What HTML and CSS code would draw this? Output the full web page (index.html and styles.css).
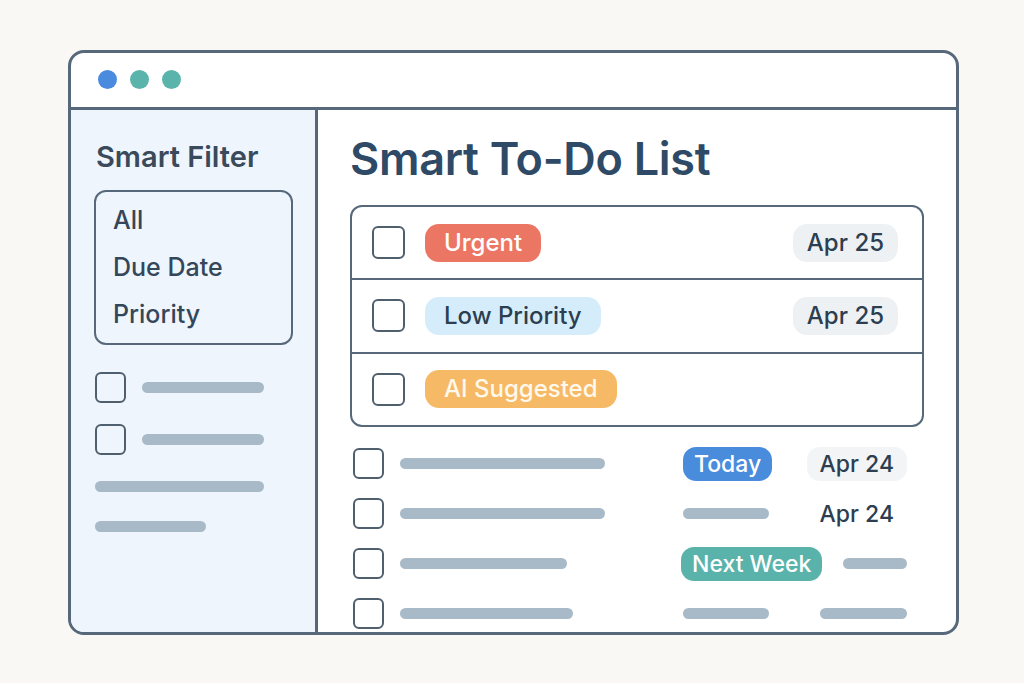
FILE: index.html
```html
<!DOCTYPE html>
<html lang="en">
<head>
  <meta charset="UTF-8" />
  <title>Smart To-Do List</title>
  <link rel="stylesheet" href="styles.css">
</head>

<body>
  <div class="window">
    <div class="titlebar">
      <span class="dot dot-blue"></span>
      <span class="dot dot-teal"></span>
      <span class="dot dot-teal"></span>
    </div>

    <div class="window-body">
      <!-- Sidebar -->
      <div class="sidebar">
        <div class="sidebar-title">Smart Filter</div>
        <div class="filter-box">
          <div class="filter-item">All</div>
          <div class="filter-item">Due Date</div>
          <div class="filter-item">Priority</div>
        </div>

        <div class="side-row">
          <span class="checkbox"></span>
          <span class="bar side-bar"></span>
        </div>
        <div class="side-row second">
          <span class="checkbox"></span>
          <span class="bar side-bar"></span>
        </div>
        <span class="bar side-bar-wide"></span>
        <span class="bar side-bar-short"></span>
      </div>

      <!-- Main list -->
      <div class="main">
        <h1 class="main-title">Smart To-Do List</h1>

        <div class="task-box">
          <div class="task-row">
            <span class="checkbox big"></span>
            <span class="tag tag-urgent">Urgent</span>
            <span class="date-pill">Apr 25</span>
          </div>
          <div class="task-row">
            <span class="checkbox big"></span>
            <span class="tag tag-low">Low Priority</span>
            <span class="date-pill">Apr 25</span>
          </div>
          <div class="task-row">
            <span class="checkbox big"></span>
            <span class="tag tag-ai">AI Suggested</span>
          </div>
        </div>

        <div class="todo-list">
          <div class="todo-row">
            <span class="checkbox"></span>
            <div class="todo-text"><span class="bar" style="width: 205px"></span></div>
            <div class="todo-tag"><span class="small-tag tag-today">Today</span></div>
            <div class="todo-date"><span class="small-date">Apr 24</span></div>
          </div>
          <div class="todo-row">
            <span class="checkbox"></span>
            <div class="todo-text"><span class="bar" style="width: 205px"></span></div>
            <div class="todo-tag"><span class="bar" style="width: 86px"></span></div>
            <div class="todo-date"><span class="small-date plain">Apr 24</span></div>
          </div>
          <div class="todo-row">
            <span class="checkbox"></span>
            <div class="todo-text"><span class="bar" style="width: 167px"></span></div>
            <div class="todo-tag"><span class="small-tag tag-week">Next Week</span></div>
            <div class="todo-date"><span class="bar" style="width: 64px"></span></div>
          </div>
          <div class="todo-row">
            <span class="checkbox"></span>
            <div class="todo-text"><span class="bar" style="width: 173px"></span></div>
            <div class="todo-tag"><span class="bar" style="width: 86px"></span></div>
            <div class="todo-date"><span class="bar" style="width: 87px"></span></div>
          </div>
        </div>
      </div>
    </div>
  </div>
</body>
</html>
```

FILE: styles.css
```css
* {
  margin: 0;
  padding: 0;
  box-sizing: border-box;
  font-family: 'Inter', 'Liberation Sans', sans-serif;
}

body {
  background-color: #FAF8F5;
  padding: 50px 0 0 68px;
}

.window {
  width: 891px;
  height: 585px;
  background-color: white;
  border: 3px solid #56687A;
  border-radius: 16px;
  overflow: hidden;
  display: flex;
  flex-direction: column;
}

.titlebar {
  height: 57px;
  border-bottom: 3px solid #56687A;
  display: flex;
  align-items: center;
  gap: 13px;
  padding-left: 27px;
  padding-bottom: 2px;
  flex-shrink: 0;
}

.dot {
  width: 19px;
  height: 19px;
  border-radius: 50%;
}

.dot-blue {
  background-color: #4A8BE0;
}

.dot-teal {
  background-color: #5BB4AC;
}

.window-body {
  flex: 1;
  display: flex;
  min-height: 0;
}

/* Sidebar */
.sidebar {
  width: 247px;
  background-color: #EEF5FC;
  border-right: 3px solid #56687A;
  padding: 31px 0 0 23px;
  display: flex;
  flex-direction: column;
  align-items: flex-start;
}

.sidebar-title {
  font-size: 29px;
  font-weight: 600;
  color: #3A4A5A;
  line-height: 32px;
  margin-left: 2px;
  margin-bottom: 17px;
}

.filter-box {
  width: 199px;
  border: 2.5px solid #56687A;
  border-radius: 12px;
  padding: 5px 17px;
  margin-bottom: 27px;
}

.filter-item {
  font-size: 25px;
  font-weight: 500;
  color: #34475A;
  line-height: 47px;
}

.side-row {
  display: flex;
  align-items: center;
  gap: 16px;
  margin-left: 1px;
}

.side-row.second {
  margin-top: 21px;
}

.checkbox {
  width: 31px;
  height: 31px;
  border: 2.5px solid #4F5F6E;
  border-radius: 6px;
  flex-shrink: 0;
}

.checkbox.big {
  width: 33px;
  height: 33px;
}

.bar {
  display: block;
  height: 11px;
  border-radius: 6px;
  background-color: #A8B9C7;
}

.side-bar {
  width: 122px;
}

.side-bar-wide {
  width: 169px;
  margin: 26px 0 0 1px;
}

.side-bar-short {
  width: 111px;
  margin: 29px 0 0 1px;
}

/* Main */
.main {
  flex: 1;
  padding: 22px 32px 0 32px;
  display: flex;
  flex-direction: column;
}

.main-title {
  font-size: 45px;
  font-weight: 600;
  color: #2E4A66;
  line-height: 54px;
  letter-spacing: -0.3px;
  margin-bottom: 19px;
}

.task-box {
  width: 574px;
  border: 2.5px solid #56687A;
  border-radius: 12px;
}

.task-row {
  height: 71px;
  display: flex;
  align-items: center;
  gap: 20px;
  padding: 0 24px 0 20px;
}

.task-row + .task-row {
  border-top: 2.5px solid #56687A;
  height: 73.5px;
}

.tag {
  height: 38px;
  line-height: 38px;
  padding: 0 19px;
  border-radius: 14px;
  font-size: 24px;
  font-weight: 500;
}

.tag-urgent {
  background-color: #EC7664;
  color: white;
}

.tag-low {
  background-color: #D5EDFB;
  color: #2C3E50;
}

.tag-ai {
  background-color: #F6B965;
  color: #FFF8EC;
}

.date-pill {
  margin-left: auto;
  height: 38px;
  line-height: 38px;
  padding: 0 14px;
  border-radius: 14px;
  font-size: 24px;
  font-weight: 500;
  color: #2C3E50;
  background-color: #EEF1F4;
}

.todo-list {
  margin-top: 21px;
  padding: 0 17px 0 3px;
  display: flex;
  flex-direction: column;
  gap: 19px;
}

.todo-row {
  height: 31px;
  display: flex;
  align-items: center;
}

.todo-text {
  flex: 1;
  padding-left: 16px;
}

.todo-tag {
  width: 114px;
  display: flex;
  align-items: center;
}

.todo-date {
  width: 110px;
  display: flex;
  justify-content: flex-end;
  align-items: center;
}

.small-tag {
  height: 34px;
  line-height: 34px;
  padding: 0 11px;
  border-radius: 13px;
  font-size: 23px;
  font-weight: 500;
  color: white;
  white-space: nowrap;
}

.tag-today {
  background-color: #4A8CDC;
}

.tag-week {
  background-color: #5AB3AB;
  margin-left: -2px;
}

.small-date {
  height: 34px;
  line-height: 34px;
  padding: 0 13px;
  border-radius: 13px;
  font-size: 23px;
  font-weight: 500;
  color: #2C3E50;
  background-color: #F2F4F6;
  white-space: nowrap;
}

.small-date.plain {
  background-color: transparent;
}
```
